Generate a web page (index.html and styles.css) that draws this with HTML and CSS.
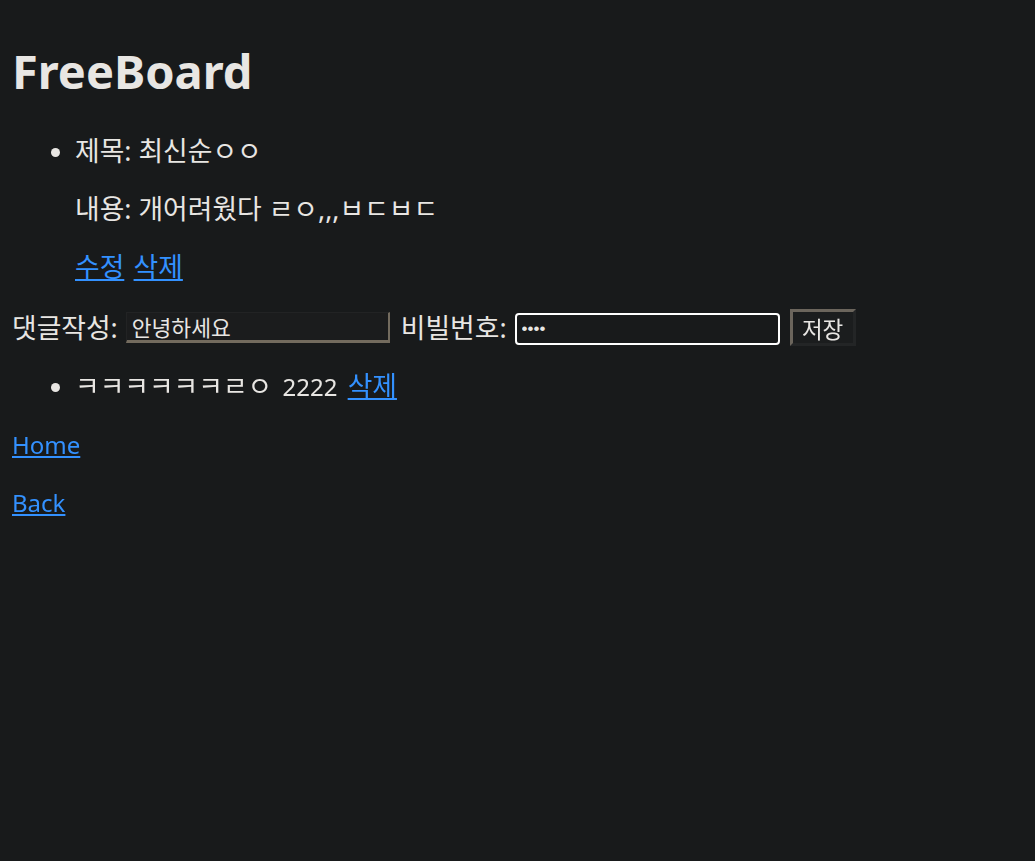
FILE: index.html
```html
<!DOCTYPE html>
<html lang="ko">
<head>
<meta charset="utf-8">
<title>FreeBoard</title>
<link rel="stylesheet" href="styles.css">
</head>
<body>
<h1 class="title">FreeBoard</h1>
<ul class="posts">
  <li><span class="ko">제목: 최신순ㅇㅇ</span>
    <p class="para"><span class="ko">내용: 개어려웠다 ㄹㅇ,,,ㅂㄷㅂㄷ</span></p>
    <p class="para links"><a href="#" class="ko">수정</a> <a href="#" class="ko">삭제</a></p>
  </li>
</ul>
<form class="comment-form">
  <label class="ko label">댓글작성:</label>
  <input class="text-input" type="text" value="안녕하세요">
  <label class="ko label">비빌번호:</label>
  <input class="pw-input" type="password" value="1234" autofocus>
  <button class="save" type="button">저장</button>
</form>
<ul class="comments">
  <li><span class="ko">ㅋㅋㅋㅋㅋㅋㄹㅇ</span> 2222 <a href="#" class="ko">삭제</a></li>
</ul>
<p class="para"><a href="#">Home</a></p>
<p class="para"><a href="#">Back</a></p>
</body>
</html>
```

FILE: styles.css
```css
html { background: #181a1b; }
body {
  margin: 12px;
  background: #181a1b;
  color: #e8e6e3;
  font-family: "Noto Sans", "Noto Sans CJK KR", sans-serif;
  font-size: 24px;
  line-height: 34px;
}
.ko {
  font-size: 26.8px;
  line-height: 1;
}
.title {
  font-size: 47px;
  line-height: 64px;
  margin: 27px 0 32px;
  font-weight: 700;
}
.posts, .comments {
  margin: 24px 0;
  padding-left: 63px;
}
.comments li { word-spacing: 4px; }
.links { word-spacing: 3px; }
.para { margin: 24px 0; }
a { color: #3391ff; }
.comment-form {
  display: flex;
  align-items: flex-start;
  height: 37px;
}
.label {
  line-height: 34px;
  margin-top: 2px;
}
.text-input {
  box-sizing: border-box;
  width: 264px;
  height: 31px;
  margin: 3px 11px 0 8px;
  padding: 0 5px;
  background: #1b1c1d;
  color: #e8e6e3;
  font-family: "Noto Sans", "Noto Sans CJK KR", sans-serif;
  font-size: 21.5px;
  border-style: solid;
  border-width: 1px 2px 3px 1px;
  border-color: #222324 #736b5e #736b5e #222324;
}
.pw-input {
  box-sizing: border-box;
  width: 265px;
  height: 32px;
  margin: 4px 10px 0 8px;
  padding: 0 5px;
  background: #181a1b;
  color: #e8e6e3;
  font-size: 17px;
  border: 2px solid #ffffff;
  border-radius: 4px;
  outline: none;
}
.save {
  box-sizing: border-box;
  width: 66px;
  height: 37px;
  background: #1b1d1e;
  color: #e8e6e3;
  font-family: "Noto Sans", "Noto Sans CJK KR", sans-serif;
  font-size: 22.5px;
  border-style: solid;
  border-width: 3px;
  border-color: #6b655c #232526 #232526 #6b655c;
  padding: 0;
}
```
